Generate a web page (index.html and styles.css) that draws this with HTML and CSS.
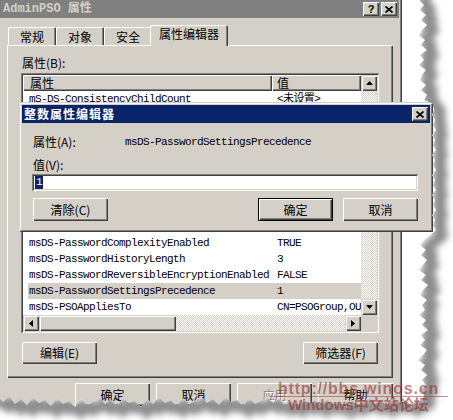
FILE: index.html
```html
<!DOCTYPE html>
<html>
<head>
<meta charset="utf-8">
<link rel="stylesheet" href="styles.css">
</head>
<body>
<div class="stage">
  <div class="win">
    <div class="titlebar">
      <span class="title">AdminPSO 属性</span>
      <div class="tbtns">
        <span class="tbtn help">?</span>
        <span class="tbtn"><svg width="8" height="7" viewBox="0 0 8 7"><path d="M0.5 0.5 L7.5 6.5 M7.5 0.5 L0.5 6.5" stroke="#000" stroke-width="1.7"/></svg></span>
      </div>
    </div>
    <div class="tabs">
      <div class="tab">常规</div><div class="tab">对象</div><div class="tab">安全</div><div class="tab active">属性编辑器</div>
    </div>
    <div class="panel">
      <div class="label">属性(B):</div>
      <div class="list">
        <div class="list-top">
          <div class="lv">
            <div class="hdr"><div class="hc c1">属性</div><div class="hc c2">值</div></div>
            <div class="row"><span class="c1">mS-DS-ConsistencyChildCount</span><span class="c2">&lt;未设置&gt;</span></div>
            <div class="row"></div>
            <div class="row"></div>
            <div class="row"></div>
            <div class="row"></div>
            <div class="row"></div>
            <div class="row"></div>
            <div class="row"></div>
            <div class="row"></div>
            <div class="row"><span class="c1">msDS-PasswordComplexityEnabled</span><span class="c2">TRUE</span></div>
            <div class="row"><span class="c1">msDS-PasswordHistoryLength</span><span class="c2">3</span></div>
            <div class="row"><span class="c1">msDS-PasswordReversibleEncryptionEnabled</span><span class="c2">FALSE</span></div>
            <div class="row sel"><span class="c1">msDS-PasswordSettingsPrecedence</span><span class="c2">1</span></div>
            <div class="row"><span class="c1">msDS-PSOAppliesTo</span><span class="c2">CN=PSOGroup,OU</span></div>
          </div>
          <div class="vscroll">
            <div class="sbtn"><svg width="7" height="4" viewBox="0 0 7 4"><path d="M3.5 0 L7 4 L0 4Z"/></svg></div>
            <div class="track"></div>
            <div class="sbtn"><svg width="7" height="4" viewBox="0 0 7 4"><path d="M0 0 L7 0 L3.5 4Z"/></svg></div>
          </div>
        </div>
        <div class="list-bottom">
          <div class="hscroll">
            <div class="sbtn"><svg width="4" height="7" viewBox="0 0 4 7"><path d="M0 3.5 L4 0 L4 7Z"/></svg></div>
            <div class="thumb"></div>
            <div class="track"></div>
            <div class="sbtn"><svg width="4" height="7" viewBox="0 0 4 7"><path d="M0 0 L4 3.5 L0 7Z"/></svg></div>
          </div>
          <div class="corner"></div>
        </div>
      </div>
      <div class="btnrow"><button class="btn">编辑(E)</button><button class="btn">筛选器(F)</button></div>
    </div>
    <div class="footer">
      <button class="btn tall">确定</button><button class="btn tall">取消</button><button class="btn tall disabled">应用</button><button class="btn tall">帮助</button>
    </div>
  </div>

  <div class="dialog">
    <div class="dtitle">
      <span class="dtext">整数属性编辑器</span>
      <span class="tbtn"><svg width="8" height="7" viewBox="0 0 8 7"><path d="M0.5 0.5 L7.5 6.5 M7.5 0.5 L0.5 6.5" stroke="#000" stroke-width="1.7"/></svg></span>
    </div>
    <div class="dbody">
      <div class="drow"><span class="dlabel">属性(A):</span><span class="mono">msDS-PasswordSettingsPrecedence</span></div>
      <div class="drow">值(V):</div>
      <div class="input"><span class="selval">1</span></div>
      <div class="dbtns"><button class="btn tall">清除(C)</button><button class="btn tall default">确定</button><button class="btn tall">取消</button></div>
    </div>
  </div>

  <svg class="torn" width="453" height="420" viewBox="0 0 453 420">
    <defs>
      <clipPath id="outside"><path d="M419 0 L424 5 L420 10 L426 15 L421 20 L427 25 L422 30 L419 35 L425 40 L421 45 L427 50 L420 55 L424 60 L419 65 L426 70 L422 75 L420 80 L426 85 L421 90 L427 95 L424 100 L433 104 L434 110 L432 115 L435 120 L433 125 L436 130 L432 135 L435 140 L433 145 L436 150 L432 155 L435 160 L433 165 L436 170 L432 175 L435 180 L433 185 L436 190 L432 195 L435 200 L433 205 L436 210 L432 215 L435 220 L433 225 L436 230 L429 236 L424 240 L420 245 L426 250 L421 255 L427 260 L423 265 L419 270 L426 275 L421 280 L428 285 L423 290 L420 295 L427 300 L422 305 L425 310 L419 315 L426 320 L422 325 L428 330 L421 335 L425 340 L420 345 L427 350 L423 355 L418 360 L425 365 L421 370 L427 375 L422 380 L426 385 L420 390 L424 395 L422 400 L417 401 L411 405 L405 400 L399 403 L393 398 L387 406 L381 400 L375 404 L369 397 L363 402 L357 405 L351 399 L345 407 L339 401 L333 404 L327 399 L321 406 L315 400 L309 404 L303 398 L297 406 L291 401 L285 405 L279 399 L273 403 L267 397 L261 401 L255 404 L249 398 L243 406 L237 400 L231 402 L225 397 L219 405 L213 399 L207 403 L201 396 L195 401 L189 404 L183 398 L177 406 L171 400 L165 403 L159 397 L153 404 L147 399 L141 407 L135 401 L129 403 L123 398 L117 406 L111 400 L105 404 L99 397 L93 402 L87 405 L81 399 L75 407 L69 401 L63 404 L57 398 L51 406 L45 400 L39 403 L33 397 L27 405 L21 399 L15 404 L9 396 L3 402 L0 398 L0 420 L453 420 L453 0 Z"/></clipPath>
      <filter id="soft" x="-20%" y="-20%" width="140%" height="140%"><feGaussianBlur stdDeviation="3"/></filter>
    </defs>
    <path fill="#fff" d="M419 0 L424 5 L420 10 L426 15 L421 20 L427 25 L422 30 L419 35 L425 40 L421 45 L427 50 L420 55 L424 60 L419 65 L426 70 L422 75 L420 80 L426 85 L421 90 L427 95 L424 100 L433 104 L434 110 L432 115 L435 120 L433 125 L436 130 L432 135 L435 140 L433 145 L436 150 L432 155 L435 160 L433 165 L436 170 L432 175 L435 180 L433 185 L436 190 L432 195 L435 200 L433 205 L436 210 L432 215 L435 220 L433 225 L436 230 L429 236 L424 240 L420 245 L426 250 L421 255 L427 260 L423 265 L419 270 L426 275 L421 280 L428 285 L423 290 L420 295 L427 300 L422 305 L425 310 L419 315 L426 320 L422 325 L428 330 L421 335 L425 340 L420 345 L427 350 L423 355 L418 360 L425 365 L421 370 L427 375 L422 380 L426 385 L420 390 L424 395 L422 400 L417 401 L411 405 L405 400 L399 403 L393 398 L387 406 L381 400 L375 404 L369 397 L363 402 L357 405 L351 399 L345 407 L339 401 L333 404 L327 399 L321 406 L315 400 L309 404 L303 398 L297 406 L291 401 L285 405 L279 399 L273 403 L267 397 L261 401 L255 404 L249 398 L243 406 L237 400 L231 402 L225 397 L219 405 L213 399 L207 403 L201 396 L195 401 L189 404 L183 398 L177 406 L171 400 L165 403 L159 397 L153 404 L147 399 L141 407 L135 401 L129 403 L123 398 L117 406 L111 400 L105 404 L99 397 L93 402 L87 405 L81 399 L75 407 L69 401 L63 404 L57 398 L51 406 L45 400 L39 403 L33 397 L27 405 L21 399 L15 404 L9 396 L3 402 L0 398 L0 420 L453 420 L453 0 Z"/>
    <g clip-path="url(#outside)">
      <path fill="none" stroke="#8e8e8e" stroke-width="12" stroke-linejoin="round" filter="url(#soft)" transform="translate(6 5)" d="M419 -10 L419 0 L424 5 L420 10 L426 15 L421 20 L427 25 L422 30 L419 35 L425 40 L421 45 L427 50 L420 55 L424 60 L419 65 L426 70 L422 75 L420 80 L426 85 L421 90 L427 95 L424 100 L433 104 L434 110 L432 115 L435 120 L433 125 L436 130 L432 135 L435 140 L433 145 L436 150 L432 155 L435 160 L433 165 L436 170 L432 175 L435 180 L433 185 L436 190 L432 195 L435 200 L433 205 L436 210 L432 215 L435 220 L433 225 L436 230 L429 236 L424 240 L420 245 L426 250 L421 255 L427 260 L423 265 L419 270 L426 275 L421 280 L428 285 L423 290 L420 295 L427 300 L422 305 L425 310 L419 315 L426 320 L422 325 L428 330 L421 335 L425 340 L420 345 L427 350 L423 355 L418 360 L425 365 L421 370 L427 375 L422 380 L426 385 L420 390 L424 395 L422 400 L417 401 L411 405 L405 400 L399 403 L393 398 L387 406 L381 400 L375 404 L369 397 L363 402 L357 405 L351 399 L345 407 L339 401 L333 404 L327 399 L321 406 L315 400 L309 404 L303 398 L297 406 L291 401 L285 405 L279 399 L273 403 L267 397 L261 401 L255 404 L249 398 L243 406 L237 400 L231 402 L225 397 L219 405 L213 399 L207 403 L201 396 L195 401 L189 404 L183 398 L177 406 L171 400 L165 403 L159 397 L153 404 L147 399 L141 407 L135 401 L129 403 L123 398 L117 406 L111 400 L105 404 L99 397 L93 402 L87 405 L81 399 L75 407 L69 401 L63 404 L57 398 L51 406 L45 400 L39 403 L33 397 L27 405 L21 399 L15 404 L9 396 L3 402 L0 398 L-10 398"/>
    </g>
  </svg>

  <div class="wm-url">http://bbs.winos.cn</div>
  <div class="wm-line"></div>
  <div class="wm-name">Windows中文站论坛</div>
</div>
</body>
</html>
```

FILE: styles.css
```css
* { box-sizing: border-box; margin: 0; padding: 0; }
html, body { background: #fff; }
body { width: 453px; height: 420px; overflow: hidden; }

.stage {
  position: relative;
  width: 453px;
  height: 420px;
  overflow: hidden;
  background: #fff;
  font-family: "Noto Sans CJK SC", "Noto Sans", sans-serif;
  font-size: 12px;
  line-height: 16px;
  color: #000;
}

/* ---------- outer window ---------- */
.win {
  width: 402px;
  height: 420px;
  background: #d4d0c8;
  display: flex;
  flex-direction: column;
  padding-right: 3px;
  box-shadow: inset -1px 0 #404040, inset -2px 0 #808080;
}
.titlebar {
  flex: none;
  height: 18px;
  background: #808080;
  display: flex;
  align-items: center;
  justify-content: space-between;
  padding: 0 2px 0 3px;
}
.title {
  font-family: "Liberation Mono", "Noto Sans CJK SC", monospace;
  font-weight: bold;
  font-size: 12px;
  line-height: 18px;
  color: #d4d0c8;
}
.tbtns { display: flex; gap: 2px; }
.tbtn {
  width: 16px;
  height: 14px;
  background: #d4d0c8;
  display: flex;
  align-items: center;
  justify-content: center;
  box-shadow: inset 1px 1px #fff, inset -1px -1px #404040, inset -2px -2px #808080;
}
.tbtn.help {
  font-family: "Liberation Sans", sans-serif;
  font-weight: bold;
  font-size: 11px;
  line-height: 14px;
  color: #000;
}

/* ---------- tabs ---------- */
.tabs {
  flex: none;
  height: 27px;
  display: flex;
  align-items: flex-end;
  padding-left: 8px;
  position: relative;
  z-index: 1;
}
.tab {
  width: 48px;
  height: 18px;
  background: #d4d0c8;
  text-align: center;
  line-height: 19px;
  border-radius: 2px 2px 0 0;
  box-shadow: inset 1px 1px #fff, inset -1px 0 #404040, inset -2px 0 #808080;
}
.tab.active {
  width: 78px;
  height: 21px;
  margin: 0 -2px -1px -2px;
  line-height: 18px;
  position: relative;
}

/* ---------- panel ---------- */
.panel {
  flex: none;
  margin-left: 7px;
  width: 386px;
  height: 333px;
  background: #d4d0c8;
  box-shadow: inset 1px 1px #fff, inset -1px -1px #404040, inset -2px -2px #808080;
  padding: 10px 0 0 14px;
  display: flex;
  flex-direction: column;
}
.label { height: 16px; line-height: 16px; margin-left: 1px; }

.list {
  margin-top: 2px;
  width: 358px;
  height: 260px;
  padding: 2px;
  background: #fff;
  box-shadow: inset 1px 1px #808080, inset -1px -1px #fff, inset 2px 2px #404040, inset -2px -2px #d4d0c8;
  display: flex;
  flex-direction: column;
}
.list-top { display: flex; height: 240px; }
.lv { width: 338px; overflow: hidden; }
.hdr { display: flex; height: 16px; }
.hc {
  height: 16px;
  line-height: 16px;
  background: #d4d0c8;
  box-shadow: inset 1px 1px #fff, inset -1px -1px #404040, inset -2px -2px #808080;
}
.hdr .c1 { width: 249px; padding-left: 7px; }
.hdr .c2 { flex: 1; padding-left: 5px; }

.row, .mono, .selval {
  font-family: "Liberation Mono", "Noto Sans CJK SC", monospace;
  font-size: 11px;
  letter-spacing: -0.6px;
}
.row {
  display: flex;
  height: 16px;
  line-height: 16px;
  white-space: nowrap;
}
.row .c1 { width: 249px; flex: none; padding-left: 6px; overflow: hidden; }
.row .c2 { flex: 1; padding-left: 5px; overflow: hidden; }
.row.sel { background: linear-gradient(90deg, transparent 5px, #d4d0c8 5px); }

.vscroll { width: 16px; display: flex; flex-direction: column; }
.sbtn {
  flex: none;
  width: 16px;
  height: 16px;
  background: #d4d0c8;
  display: flex;
  align-items: center;
  justify-content: center;
  box-shadow: inset 1px 1px #d4d0c8, inset 2px 2px #fff, inset -1px -1px #404040, inset -2px -2px #808080;
}
.track {
  flex: 1;
  background: repeating-conic-gradient(#fff 0 25%, #d4d0c8 0 50%) 0 0 / 2px 2px;
}
.list-bottom { display: flex; height: 16px; }
.hscroll { width: 338px; display: flex; }
.thumb {
  flex: none;
  width: 137px;
  background: #d4d0c8;
  box-shadow: inset 1px 1px #d4d0c8, inset 2px 2px #fff, inset -1px -1px #404040, inset -2px -2px #808080;
}
.corner { flex: 1; background: #d4d0c8; }

.btnrow {
  margin-top: 9px;
  width: 358px;
  padding: 0 1px;
  display: flex;
  justify-content: space-between;
}

/* ---------- buttons ---------- */
.btn {
  border: 0;
  font: inherit;
  color: #000;
  background: #d4d0c8;
  width: 75px;
  height: 22px;
  display: flex;
  align-items: center;
  justify-content: center;
  box-shadow: inset 1px 1px #fff, inset -1px -1px #404040, inset -2px -2px #808080;
}
.btn.tall { height: 23px; }
.btn.default {
  box-shadow: inset 0 0 0 1px #000, inset 2px 2px #fff, inset -2px -2px #404040, inset -3px -3px #808080;
}
.btn.disabled { color: #808080; text-shadow: 1px 1px #fff; }

.footer {
  flex: none;
  display: flex;
  gap: 6px;
  padding: 5px 0 0 75px;
}

/* ---------- dialog ---------- */
.dialog {
  position: absolute;
  left: 19px;
  top: 102px;
  width: 414px;
  height: 130px;
  background: #d4d0c8;
  padding: 3px;
  box-shadow: inset 1px 1px #d4d0c8, inset -1px -1px #404040, inset 2px 2px #fff, inset -2px -2px #808080;
  display: flex;
  flex-direction: column;
}
.dtitle {
  flex: none;
  height: 18px;
  background: #0a246a;
  display: flex;
  align-items: center;
  justify-content: space-between;
  padding: 0 2px 0 2px;
}
.dtext {
  color: #fff;
  font-weight: bold;
  letter-spacing: 1px;
  line-height: 18px;
}
.dbody {
  padding: 11px 12px 0 11px;
  display: flex;
  flex-direction: column;
}
.drow { height: 16px; line-height: 16px; display: flex; }
.drow + .drow { margin-top: 7px; }
.dlabel { width: 92px; flex: none; }
.input {
  margin: 1px 0 0 -1px;
  height: 17px;
  background: #fff;
  box-shadow: inset 1px 1px #808080, inset -1px -1px #fff, inset 2px 2px #404040, inset -2px -2px #d4d0c8;
  padding: 2px 3px;
  display: flex;
  align-items: center;
}
.selval {
  background: #0a246a;
  color: #fff;
  line-height: 13px;
  padding: 0 1px;
}
.dbtns { margin-top: 7px; display: flex; gap: 10px; }
.dbtns .btn:nth-child(2) { margin-left: auto; }

/* ---------- decoration ---------- */
.torn { position: absolute; left: 0; top: 0; }

.wm-url {
  position: absolute;
  left: 278px;
  top: 381px;
  font-family: "Liberation Sans", sans-serif;
  font-weight: bold;
  font-size: 16px;
  line-height: 16px;
  letter-spacing: 0.8px;
  color: rgba(150, 45, 45, 0.6);
  white-space: nowrap;
}
.wm-line {
  position: absolute;
  left: 270px;
  top: 396px;
  width: 178px;
  height: 1px;
  background: rgba(150, 60, 60, 0.55);
}
.wm-name {
  position: absolute;
  left: 288px;
  top: 397px;
  font-family: "Liberation Sans", "Noto Sans CJK SC", sans-serif;
  font-weight: bold;
  font-size: 15px;
  line-height: 16px;
  color: rgba(150, 45, 45, 0.6);
  white-space: nowrap;
}
```
